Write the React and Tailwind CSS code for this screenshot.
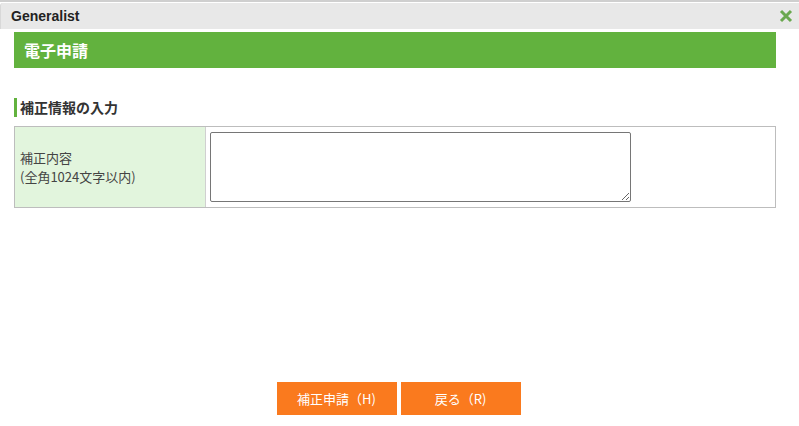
import React from 'react';

const jp = { fontFamily: '"Meiryo", "Noto Sans CJK JP", "Noto Sans", sans-serif' };

const App = () => {
  return (
    <div className="w-[799px] h-[426px] bg-white flex flex-col text-[#333]" style={jp}>
      <div className="h-[2px] bg-[#cfcfcf]" />
      <div className="mt-px h-[26px] flex items-center justify-between bg-[#e8e8e8] border-l border-[#d8d8d8] rounded-tl-[3px] pl-[10px] pr-[6px]">
        <span className="text-[14px] font-bold text-[#222]" style={{ fontFamily: '"Liberation Sans", Arial, sans-serif' }}>
          Generalist
        </span>
        <svg width="14" height="14" viewBox="0 0 14 14">
          <path d="M2 2 L12 12 M12 2 L2 12" stroke="#6aa84f" strokeWidth="3" strokeLinecap="butt" />
        </svg>
      </div>

      <div className="ml-[14px] mr-[23px] mt-[3px] h-[36px] bg-[#62b23e] flex items-center pl-[10px]">
        <span className="text-[16px] font-bold text-white">電子申請</span>
      </div>

      <div className="ml-[14px] mr-[23px] mt-[30px] flex items-center h-[19px]">
        <div className="w-[3px] h-[19px] bg-[#62b23e]" />
        <span className="ml-[3px] text-[14px] font-bold text-[#333]">補正情報の入力</span>
      </div>

      <div className="ml-[14px] mr-[23px] mt-[9px] h-[82px] border border-[#bdbdbd] flex">
        <div className="w-[191px] bg-[#e2f5dd] border-r border-[#d0d0d0] flex flex-col justify-center pl-[5px] text-[13px] leading-[19px] text-[#444]">
          <span>補正内容</span>
          <span>(全角1024文字以内)</span>
        </div>
        <div className="flex-1 pl-[4px] pt-[5px]">
          <textarea className="w-[421px] h-[70px] border border-[#767676] rounded-[2px] bg-white outline-none resize" />
        </div>
      </div>

      <div className="flex-1" />

      <div className="flex justify-center gap-[4px] mb-[11px] pr-[2px]">
        <button type="button" className="w-[120px] h-[33px] bg-[#fa7a1e] text-white text-[13px]">
          補正申請（H)
        </button>
        <button type="button" className="w-[120px] h-[33px] bg-[#fa7a1e] text-white text-[13px]">
          戻る（R)
        </button>
      </div>
    </div>
  );
};

export default App;
